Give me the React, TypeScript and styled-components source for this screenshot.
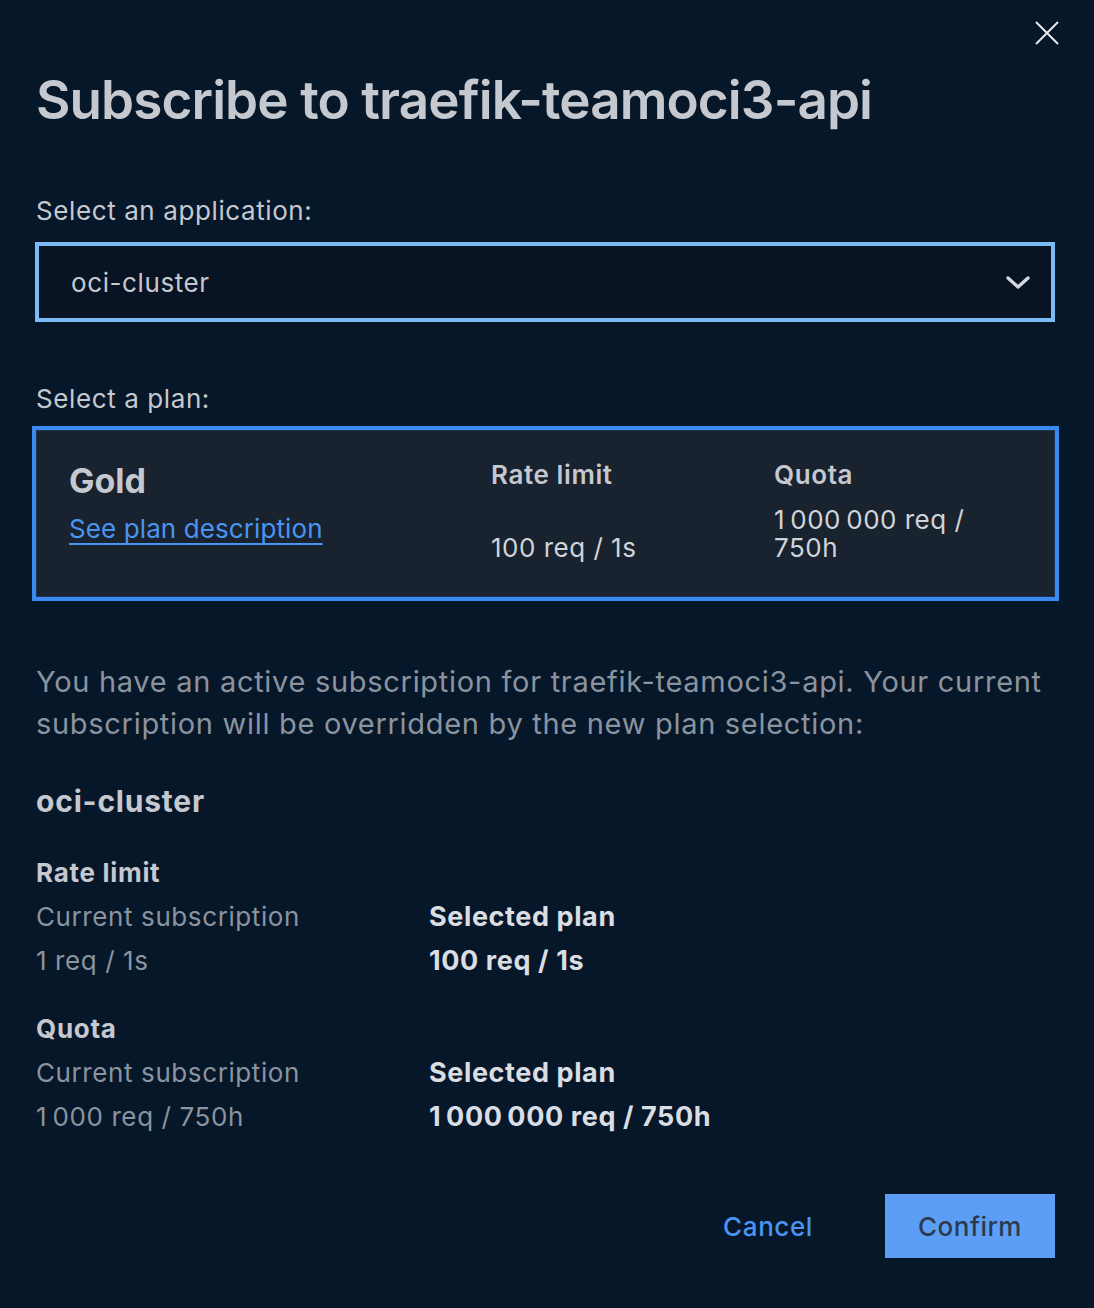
import React from 'react'
import styled, { createGlobalStyle } from 'styled-components'

const GlobalStyle = createGlobalStyle`
  html, body {
    margin: 0;
    padding: 0;
    background: #07172a;
  }
  body {
    font-family: Inter, "Noto Sans", "Liberation Sans", sans-serif;
    -webkit-font-smoothing: antialiased;
  }
  * { box-sizing: border-box; }
`

const Dialog = styled.div`
  position: relative;
  width: 1094px;
  min-height: 1308px;
  background: #07172a;
  padding: 66px 36px 50px 36px;
  display: flex;
  flex-direction: column;
`

const CloseButton = styled.button`
  position: absolute;
  top: 20px;
  right: 34px;
  width: 26px;
  height: 26px;
  padding: 0;
  border: none;
  background: transparent;
  cursor: pointer;
  display: flex;
  align-items: center;
  justify-content: center;
`

const Title = styled.h1`
  margin: 0;
  font-size: 53px;
  line-height: 68px;
  font-weight: 600;
  color: #c5c9cf;
  letter-spacing: -0.9px;
`

const FieldLabel = styled.label<{ $top: number }>`
  display: block;
  margin-top: ${p => p.$top}px;
  font-size: 26px;
  line-height: 34px;
  letter-spacing: 0.6px;
  color: #c5c9cf;
`

const SelectBox = styled.div`
  margin-top: 14px;
  margin-left: -1px;
  width: 1020px;
  height: 80px;
  border: 4px solid #7cbaf6;
  background: #081323;
  display: flex;
  align-items: center;
  justify-content: space-between;
  padding: 0 20px 0 32px;
  font-size: 26px;
  letter-spacing: 0.6px;
  color: #c5c9cf;
`

const PlanCard = styled.div`
  margin-top: 10px;
  margin-left: -4px;
  width: 1027px;
  height: 175px;
  border: 4px solid #3b8aef;
  box-shadow: inset 0 0 0 1px #1c3552;
  background: #19222f;
  display: grid;
  grid-template-columns: 422px 283px 1fr;
  padding: 28px 34px 0 33px;
`

const PlanCol = styled.div`
  height: 104px;
  display: flex;
  flex-direction: column;
  justify-content: space-between;
`

const GoldCol = styled.div`
  display: flex;
  flex-direction: column;
`

const PlanName = styled.div`
  font-size: 34px;
  line-height: 44px;
  font-weight: 700;
  color: #c5c9cf;
  margin-top: 1px;
`

const PlanLink = styled.a`
  margin-top: 9px;
  align-self: flex-start;
  font-size: 26px;
  line-height: 34px;
  letter-spacing: 0.1px;
  color: #4a95f0;
  text-decoration: underline;
  text-underline-offset: 5px;
  text-decoration-thickness: 2px;
  cursor: pointer;
`

const PlanHeading = styled.div`
  font-size: 26px;
  line-height: 34px;
  font-weight: 600;
  letter-spacing: 0.6px;
  color: #c5c9cf;
`

const PlanValue = styled.div`
  font-size: 26px;
  line-height: 28px;
  letter-spacing: 0.5px;
  color: #d0d4d9;
  max-width: 215px;
`

const Notice = styled.p`
  margin: 60px 0 0 0;
  font-size: 29px;
  line-height: 42px;
  color: #8a939e;
  letter-spacing: 0.7px;
`

const AppName = styled.h2`
  margin: 36px 0 0 0;
  font-size: 30px;
  line-height: 40px;
  font-weight: 700;
  color: #c5c9cf;
  letter-spacing: 0.8px;
`

const Section = styled.section<{ $top: number }>`
  margin-top: ${p => p.$top}px;
  display: grid;
  grid-template-columns: 393px 1fr;
`

const SectionTitle = styled.div`
  grid-column: 1 / -1;
  font-size: 26px;
  line-height: 44px;
  font-weight: 700;
  letter-spacing: 0.7px;
  color: #c5c9cf;
`

const Cell = styled.div<{ $strong?: boolean }>`
  font-size: ${p => (p.$strong ? 27 : 26)}px;
  line-height: 44px;
  font-weight: ${p => (p.$strong ? 700 : 400)};
  letter-spacing: 0.6px;
  color: ${p => (p.$strong ? '#dadde1' : '#8a939e')};
`

const Actions = styled.div`
  margin-top: 55px;
  display: flex;
  justify-content: flex-end;
  align-items: center;
  gap: 72px;
  padding-right: 3px;
`

const TextButton = styled.button`
  border: none;
  background: transparent;
  padding: 0;
  font-family: inherit;
  font-size: 26px;
  font-weight: 500;
  letter-spacing: 0.6px;
  color: #4a95f0;
  cursor: pointer;
`

const PrimaryButton = styled.button`
  width: 170px;
  height: 64px;
  border: none;
  background: #5c9ef5;
  font-family: inherit;
  font-size: 26px;
  font-weight: 500;
  letter-spacing: 0.5px;
  color: #2b3a4e;
  cursor: pointer;
`

const Chevron = () => (
  <svg width="26" height="18" viewBox="0 0 26 18" fill="none">
    <path d="M3 5l10 9 10-9" stroke="#d5d8dc" strokeWidth="3.4" strokeLinecap="round" strokeLinejoin="round" />
  </svg>
)

const nb = '\u202F'

export default function App() {
  return (
    <>
      <GlobalStyle />
      <Dialog>
        <CloseButton aria-label="Close">
          <svg width="26" height="26" viewBox="0 0 26 26">
            <path d="M2 2l22 22M24 2L2 24" stroke="#e8eaed" strokeWidth="2" />
          </svg>
        </CloseButton>

        <Title>Subscribe to traefik-teamoci3-api</Title>

        <FieldLabel $top={60}>Select an application:</FieldLabel>
        <SelectBox>
          <span>oci-cluster</span>
          <Chevron />
        </SelectBox>

        <FieldLabel $top={60}>Select a plan:</FieldLabel>
        <PlanCard>
          <GoldCol>
            <PlanName>Gold</PlanName>
            <PlanLink>See plan description</PlanLink>
          </GoldCol>
          <PlanCol>
            <PlanHeading>Rate limit</PlanHeading>
            <PlanValue>100 req / 1s</PlanValue>
          </PlanCol>
          <PlanCol>
            <PlanHeading>Quota</PlanHeading>
            <PlanValue>{`1${nb}000${nb}000 req / 750h`}</PlanValue>
          </PlanCol>
        </PlanCard>

        <Notice>
          You have an active subscription for traefik-teamoci3-api. Your current subscription will be
          overridden by the new plan selection:
        </Notice>

        <AppName>oci-cluster</AppName>

        <Section $top={30}>
          <SectionTitle>Rate limit</SectionTitle>
          <Cell>Current subscription</Cell>
          <Cell $strong>Selected plan</Cell>
          <Cell>1 req / 1s</Cell>
          <Cell $strong>100 req / 1s</Cell>
        </Section>

        <Section $top={24}>
          <SectionTitle>Quota</SectionTitle>
          <Cell>Current subscription</Cell>
          <Cell $strong>Selected plan</Cell>
          <Cell>{`1${nb}000 req / 750h`}</Cell>
          <Cell $strong>{`1${nb}000${nb}000 req / 750h`}</Cell>
        </Section>

        <Actions>
          <TextButton>Cancel</TextButton>
          <PrimaryButton>Confirm</PrimaryButton>
        </Actions>
      </Dialog>
    </>
  )
}
